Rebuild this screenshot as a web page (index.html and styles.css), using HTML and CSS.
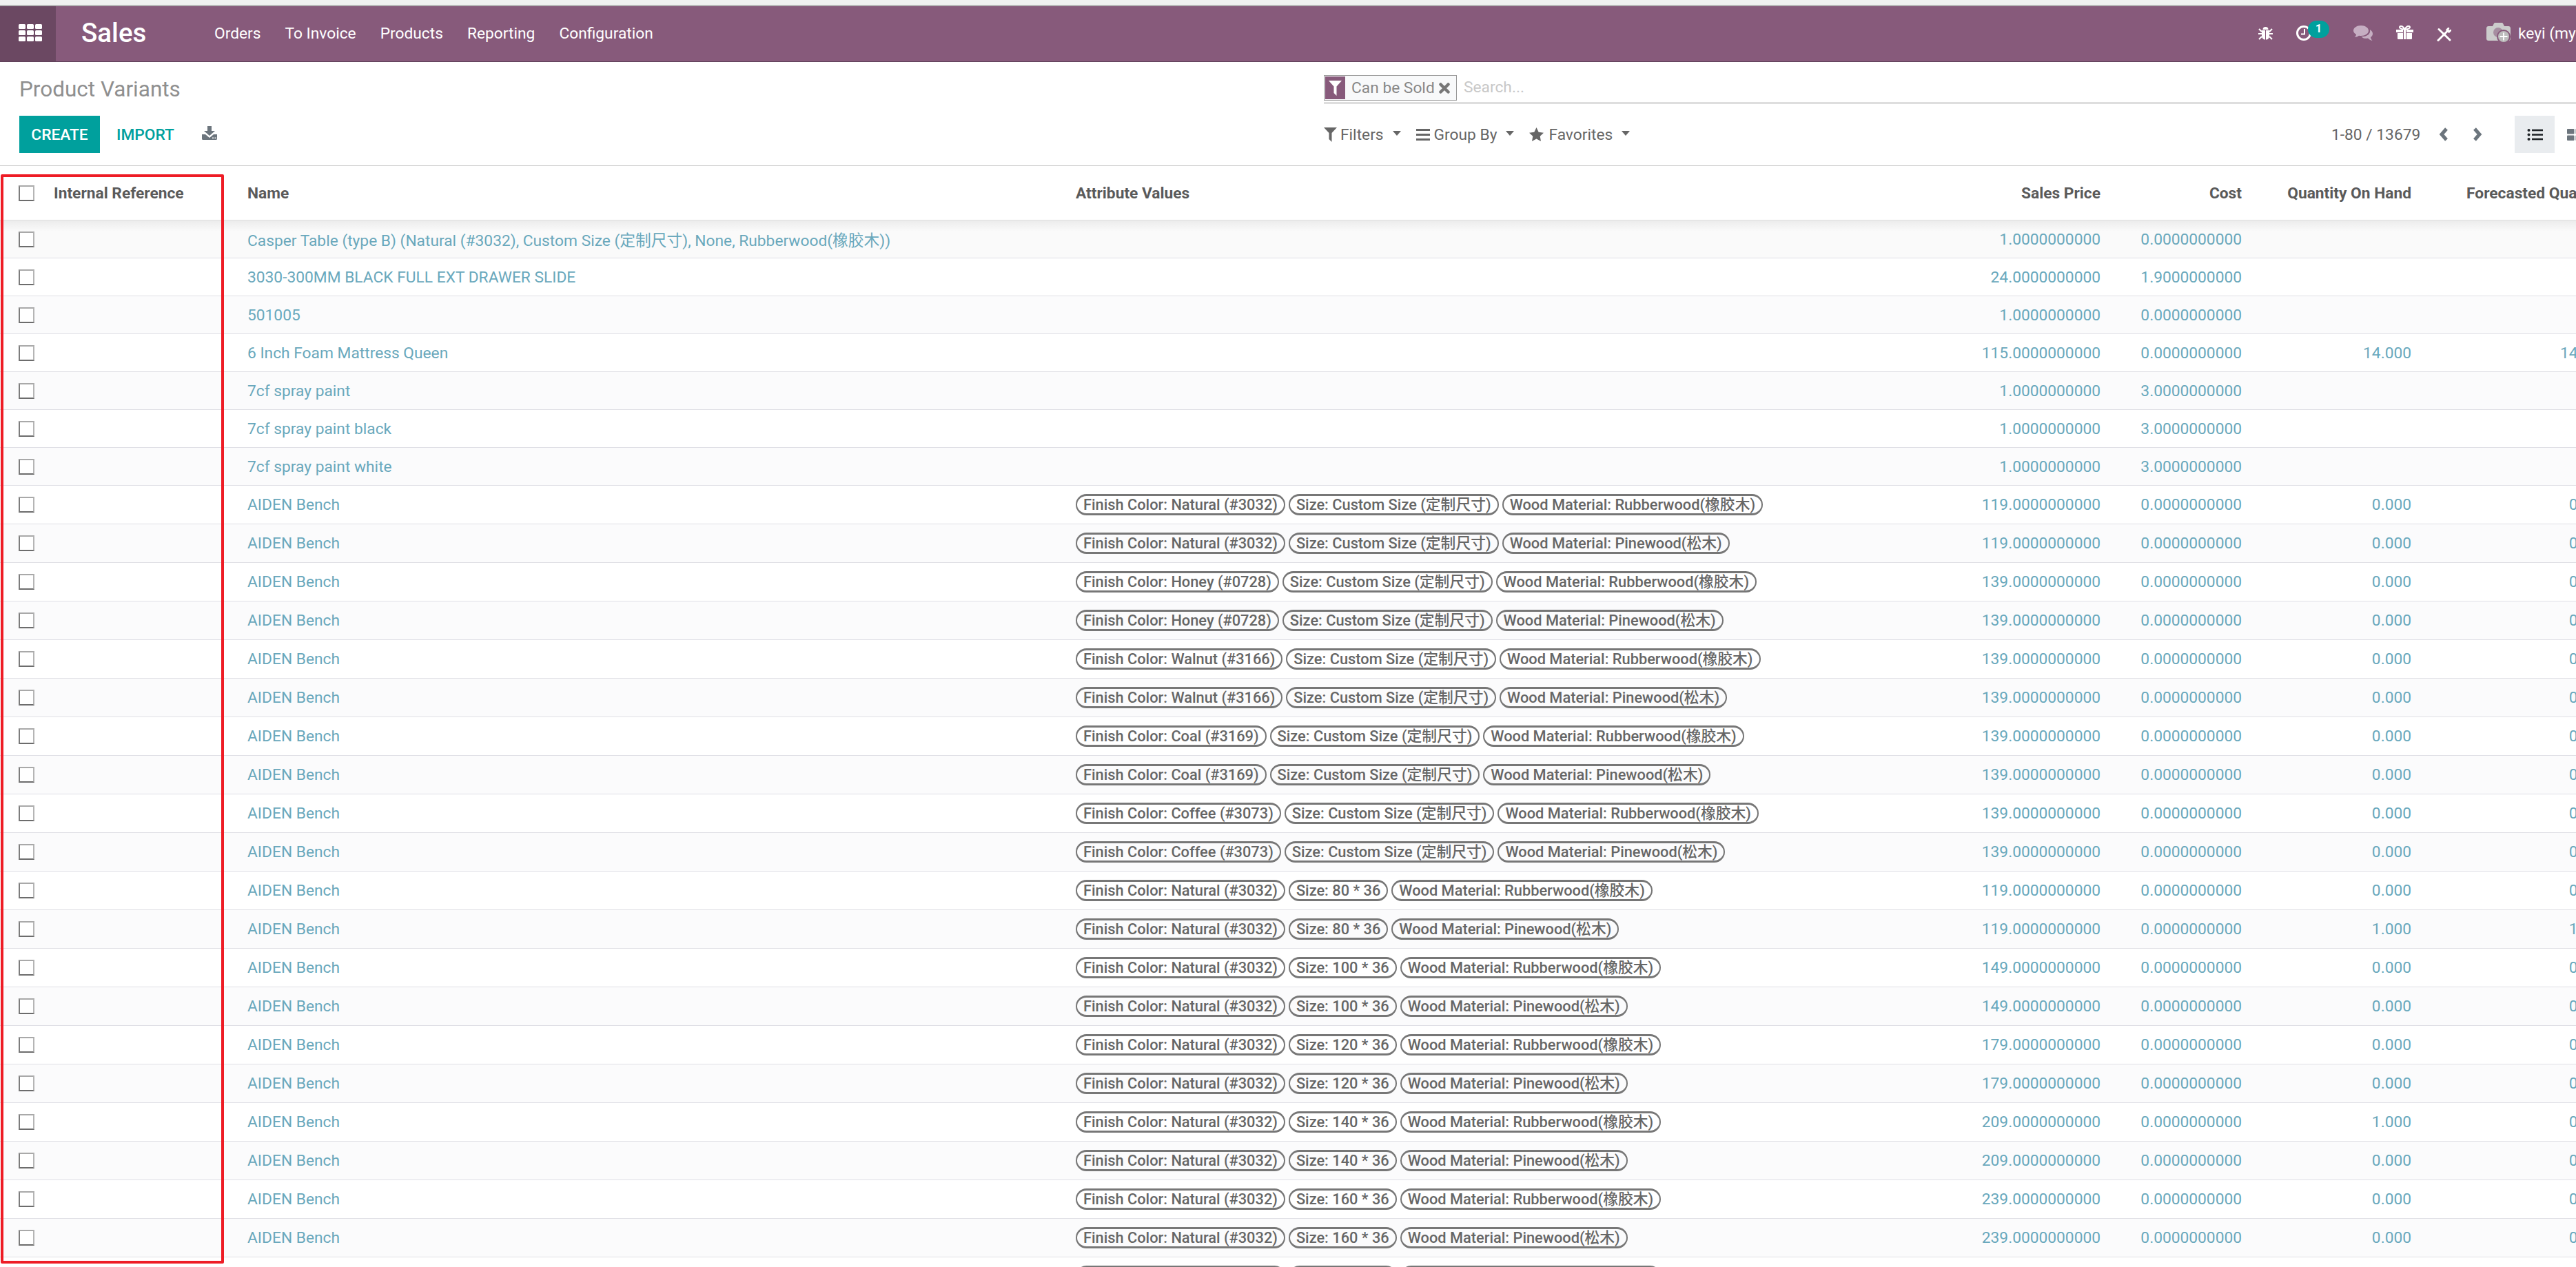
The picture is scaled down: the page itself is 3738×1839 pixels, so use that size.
FILE: index.html
```html
<!DOCTYPE html>
<html lang="en">
<head>
<meta charset="utf-8">
<title>Product Variants</title>
<link rel="stylesheet" href="styles.css">
</head>
<body>
<div class="topstrip"></div>
<nav class="nav">
  <a class="apps"><svg class="i-apps" viewBox="0 0 34 25"><g fill="#fff"><rect width="10" height="7" rx="1.5"/><rect x="12" width="10" height="7" rx="1.5"/><rect x="24" width="10" height="7" rx="1.5"/><rect y="9" width="10" height="7" rx="1.5"/><rect x="12" y="9" width="10" height="7" rx="1.5"/><rect x="24" y="9" width="10" height="7" rx="1.5"/><rect y="18" width="10" height="7" rx="1.5"/><rect x="12" y="18" width="10" height="7" rx="1.5"/><rect x="24" y="18" width="10" height="7" rx="1.5"/></g></svg></a>
  <span class="brand">Sales</span>
  <ul class="menu">
    <li>Orders</li><li>To Invoice</li><li>Products</li><li>Reporting</li><li>Configuration</li>
  </ul>
  <div class="systray">
    <svg class="i-bug" viewBox="0 0 21 20"><g fill="#fff"><path d="M6.5 5a4 4 0 0 1 8 0z"/><path d="M5 6h5v13.5c-3 0-5-2.500-5-6zM11 6h5v7.500c0 4-2 6-5 6z"/></g><g stroke="#fff" stroke-width="2" fill="none"><path d="M1 4l4 4M20 4l-4 4M0 11h5M21 11h-5M1 19l4-4M20 19l-4-4"/></g></svg>
    <span class="clock"><svg class="i-clock" viewBox="0 0 24 22"><circle cx="11" cy="11" r="9.500" fill="none" stroke="#fff" stroke-width="3"/><path d="M12 5v7.500H7" fill="none" stroke="#fff" stroke-width="2"/></svg><span class="badge">1</span></span>
    <svg class="i-chat" viewBox="0 0 28 22"><g fill="#c6aec2"><path d="M11 0c6 0 11 3.300 11 7.500S17 15 11 15c-1 0-2 0-3-.3C6 16 4 17 1.500 17 3 16 4 14.500 4 13 1.500 11.500 0 9.700 0 7.500 0 3.300 5 0 11 0z"/><path d="M24 6c2.500 1.500 4 3.500 4 6 0 2-1 3.700-3 5 0 1.500 1 3.500 2.500 5-2.500-.5-5-2-6.500-3.500-1 .2-2 .3-3 .3-2.500 0-5-.7-6.500-2.800 7 .5 14-3 12.500-10z"/></g></svg>
    <svg class="i-gift" viewBox="0 0 25 20"><g fill="#fff"><path d="M0 6h10v4H0zM15 6h10v4H15zM2 11h8v9H3.500C2.500 20 2 19.500 2 18.500zM15 11h8v7.500c0 1-.5 1.500-1.500 1.500H15zM11 6h3v14h-3z"/></g><path d="M12.500 5.500C10 1 7 0 5.500 1.500S6 5.500 12.500 5.500C19 5.500 21 3 19.500 1.500S15 1 12.500 5.500z" fill="none" stroke="#fff" stroke-width="2"/></svg>
    <svg class="i-tools" viewBox="0 0 21 20"><g fill="none" stroke="#fff" stroke-linecap="round"><path d="M3 2.500l16 15.500" stroke-width="3"/><path d="M16.500 4L2 18.500" stroke-width="3"/><path d="M14.500 3.500L17 1M17.500 6.500l2.500-2.500" stroke-width="2.500"/></g></svg>
    <svg class="i-cam" viewBox="0 0 35 30"><path fill="#ccc" d="M3 5h6l2-4c.3-.6.8-1 1.500-1h10c.7 0 1.200.4 1.500 1l2 4h6c1.700 0 3 1.300 3 3v15c0 1.700-1.300 3-3 3H3c-1.700 0-3-1.300-3-3V8c0-1.700 1.300-3 3-3z"/><circle cx="17" cy="14" r="7" fill="#875a7b" opacity=".55"/><circle cx="25" cy="20" r="9" fill="#bdbdbd" stroke="#875a7b" stroke-width="2"/><path d="M25 14.500v11M19.500 20h11" stroke="#fff" stroke-width="1.800"/></svg>
    <span class="user">keyi (mycompany)</span>
  </div>
</nav>

<section class="panel">
  <div class="panel-left">
    <h1 class="crumb">Product Variants</h1>
    <div class="buttons">
      <button class="btn-create">CREATE</button>
      <button class="btn-import">IMPORT</button>
      <svg class="i-down" viewBox="0 0 22 20"><path fill="#6c757d" d="M8 0h6v7h5l-8 7-8-7h5z"/><path fill="#6c757d" d="M0 12h5l6 5 6-5h5v6.500c0 .8-.7 1.500-1.500 1.500h-19C.7 20 0 19.300 0 18.500z"/><path fill="#fff" d="M15 16.500h2v1.500h-2zM18.500 16.500h2v1.500h-2z"/></svg>
    </div>
  </div>
  <div class="panel-right">
    <div class="search">
      <div class="facet">
        <span class="facet-icon"><svg class="i-facet" viewBox="0 0 19 22"><path fill="#fff" d="M0 0h19l-7.500 8.500V22L7.500 18V8.500z"/></svg></span>
        <span class="facet-text">Can be Sold</span>
        <svg class="i-x" viewBox="0 0 16 16"><path d="M2.500 2.500l11 11M13.500 2.500l-11 11" stroke="#777" stroke-width="4.500" stroke-linecap="round"/></svg>
      </div>
      <span class="placeholder">Search...</span>
    </div>
    <div class="tools">
      <div class="filters">
        <span class="drop"><svg class="i-funnel" viewBox="0 0 19 21"><path fill="#666" d="M0 0h19l-7.500 8V21L7.500 17V8z"/></svg>Filters<i class="caret"></i></span>
        <span class="drop"><svg class="i-bars" viewBox="0 0 20 17"><path fill="#666" d="M0 0h20v3H0zM0 7h20v3H0zM0 14h20v3H0z"/></svg>Group By<i class="caret"></i></span>
        <span class="drop"><svg class="i-star" viewBox="0 0 21 20"><path fill="#666" d="M10.500 0l3.200 6.700 7.300 1-5.300 5.100 1.300 7.200-6.500-3.500L4 20l1.300-7.200L0 7.700l7.300-1z"/></svg>Favorites<i class="caret"></i></span>
      </div>
      <div class="pager">
        <span class="count">1-80 / 13679</span>
        <svg class="i-chev" viewBox="0 0 14 22"><path d="M11 3L4 11l7 8" fill="none" stroke="#6c757d" stroke-width="5"/></svg>
        <svg class="i-chev next" viewBox="0 0 14 22"><path d="M3 3l7 8-7 8" fill="none" stroke="#6c757d" stroke-width="5"/></svg>
        <span class="view active"><svg class="i-list" viewBox="0 0 23 17"><g fill="#212529"><circle cx="2.500" cy="2" r="2"/><circle cx="2.500" cy="8.500" r="2"/><circle cx="2.500" cy="15" r="2"/><rect x="7" y=".7" width="16" height="2.600"/><rect x="7" y="7.200" width="16" height="2.600"/><rect x="7" y="13.700" width="16" height="2.600"/></g></svg></span>
        <span class="view"><svg class="i-kanban" viewBox="0 0 23 17"><g fill="#6c757d"><rect width="10.500" height="7.500" rx="1"/><rect x="12.500" width="10.500" height="7.500" rx="1"/><rect y="9.500" width="10.500" height="7.500" rx="1"/><rect x="12.500" y="9.500" width="10.500" height="7.500" rx="1"/></g></svg></span>
      </div>
    </div>
  </div>
</section>

<table class="list">
  <colgroup><col class="c-check"><col class="c-ref"><col class="c-name"><col class="c-attr"><col class="c-price"><col class="c-cost"><col class="c-qty"><col class="c-fore"></colgroup>
  <thead>
    <tr><th class="check-cell"><input type="checkbox"></th><th>Internal Reference</th><th>Name</th><th>Attribute Values</th><th class="num">Sales Price</th><th class="num">Cost</th><th class="num">Quantity On Hand</th><th class="num">Forecasted Quantity</th></tr>
  </thead>
  <tbody>
    <tr><td class="check-cell"><input type="checkbox"></td><td></td><td>Casper Table (type B) (Natural (#3032), Custom Size (定制尺寸), None, Rubberwood(橡胶木))</td><td></td><td class="num">1.0000000000</td><td class="num">0.0000000000</td><td class="num"></td><td class="num"></td></tr>
    <tr><td class="check-cell"><input type="checkbox"></td><td></td><td>3030-300MM BLACK FULL EXT DRAWER SLIDE</td><td></td><td class="num">24.0000000000</td><td class="num">1.9000000000</td><td class="num"></td><td class="num"></td></tr>
    <tr><td class="check-cell"><input type="checkbox"></td><td></td><td>501005</td><td></td><td class="num">1.0000000000</td><td class="num">0.0000000000</td><td class="num"></td><td class="num"></td></tr>
    <tr><td class="check-cell"><input type="checkbox"></td><td></td><td>6 Inch Foam Mattress Queen</td><td></td><td class="num">115.0000000000</td><td class="num">0.0000000000</td><td class="num">14.000</td><td class="num">14.000</td></tr>
    <tr><td class="check-cell"><input type="checkbox"></td><td></td><td>7cf spray paint</td><td></td><td class="num">1.0000000000</td><td class="num">3.0000000000</td><td class="num"></td><td class="num"></td></tr>
    <tr><td class="check-cell"><input type="checkbox"></td><td></td><td>7cf spray paint black</td><td></td><td class="num">1.0000000000</td><td class="num">3.0000000000</td><td class="num"></td><td class="num"></td></tr>
    <tr><td class="check-cell"><input type="checkbox"></td><td></td><td>7cf spray paint white</td><td></td><td class="num">1.0000000000</td><td class="num">3.0000000000</td><td class="num"></td><td class="num"></td></tr>
    <tr class="tagged"><td class="check-cell"><input type="checkbox"></td><td></td><td>AIDEN Bench</td><td><div class="tags"><span class="tag">Finish Color: Natural (#3032)</span><span class="tag">Size: Custom Size (定制尺寸)</span><span class="tag">Wood Material: Rubberwood(橡胶木)</span></div></td><td class="num">119.0000000000</td><td class="num">0.0000000000</td><td class="num">0.000</td><td class="num">0.000</td></tr>
    <tr class="tagged"><td class="check-cell"><input type="checkbox"></td><td></td><td>AIDEN Bench</td><td><div class="tags"><span class="tag">Finish Color: Natural (#3032)</span><span class="tag">Size: Custom Size (定制尺寸)</span><span class="tag">Wood Material: Pinewood(松木)</span></div></td><td class="num">119.0000000000</td><td class="num">0.0000000000</td><td class="num">0.000</td><td class="num">0.000</td></tr>
    <tr class="tagged"><td class="check-cell"><input type="checkbox"></td><td></td><td>AIDEN Bench</td><td><div class="tags"><span class="tag">Finish Color: Honey (#0728)</span><span class="tag">Size: Custom Size (定制尺寸)</span><span class="tag">Wood Material: Rubberwood(橡胶木)</span></div></td><td class="num">139.0000000000</td><td class="num">0.0000000000</td><td class="num">0.000</td><td class="num">0.000</td></tr>
    <tr class="tagged"><td class="check-cell"><input type="checkbox"></td><td></td><td>AIDEN Bench</td><td><div class="tags"><span class="tag">Finish Color: Honey (#0728)</span><span class="tag">Size: Custom Size (定制尺寸)</span><span class="tag">Wood Material: Pinewood(松木)</span></div></td><td class="num">139.0000000000</td><td class="num">0.0000000000</td><td class="num">0.000</td><td class="num">0.000</td></tr>
    <tr class="tagged"><td class="check-cell"><input type="checkbox"></td><td></td><td>AIDEN Bench</td><td><div class="tags"><span class="tag">Finish Color: Walnut (#3166)</span><span class="tag">Size: Custom Size (定制尺寸)</span><span class="tag">Wood Material: Rubberwood(橡胶木)</span></div></td><td class="num">139.0000000000</td><td class="num">0.0000000000</td><td class="num">0.000</td><td class="num">0.000</td></tr>
    <tr class="tagged"><td class="check-cell"><input type="checkbox"></td><td></td><td>AIDEN Bench</td><td><div class="tags"><span class="tag">Finish Color: Walnut (#3166)</span><span class="tag">Size: Custom Size (定制尺寸)</span><span class="tag">Wood Material: Pinewood(松木)</span></div></td><td class="num">139.0000000000</td><td class="num">0.0000000000</td><td class="num">0.000</td><td class="num">0.000</td></tr>
    <tr class="tagged"><td class="check-cell"><input type="checkbox"></td><td></td><td>AIDEN Bench</td><td><div class="tags"><span class="tag">Finish Color: Coal (#3169)</span><span class="tag">Size: Custom Size (定制尺寸)</span><span class="tag">Wood Material: Rubberwood(橡胶木)</span></div></td><td class="num">139.0000000000</td><td class="num">0.0000000000</td><td class="num">0.000</td><td class="num">0.000</td></tr>
    <tr class="tagged"><td class="check-cell"><input type="checkbox"></td><td></td><td>AIDEN Bench</td><td><div class="tags"><span class="tag">Finish Color: Coal (#3169)</span><span class="tag">Size: Custom Size (定制尺寸)</span><span class="tag">Wood Material: Pinewood(松木)</span></div></td><td class="num">139.0000000000</td><td class="num">0.0000000000</td><td class="num">0.000</td><td class="num">0.000</td></tr>
    <tr class="tagged"><td class="check-cell"><input type="checkbox"></td><td></td><td>AIDEN Bench</td><td><div class="tags"><span class="tag">Finish Color: Coffee (#3073)</span><span class="tag">Size: Custom Size (定制尺寸)</span><span class="tag">Wood Material: Rubberwood(橡胶木)</span></div></td><td class="num">139.0000000000</td><td class="num">0.0000000000</td><td class="num">0.000</td><td class="num">0.000</td></tr>
    <tr class="tagged"><td class="check-cell"><input type="checkbox"></td><td></td><td>AIDEN Bench</td><td><div class="tags"><span class="tag">Finish Color: Coffee (#3073)</span><span class="tag">Size: Custom Size (定制尺寸)</span><span class="tag">Wood Material: Pinewood(松木)</span></div></td><td class="num">139.0000000000</td><td class="num">0.0000000000</td><td class="num">0.000</td><td class="num">0.000</td></tr>
    <tr class="tagged"><td class="check-cell"><input type="checkbox"></td><td></td><td>AIDEN Bench</td><td><div class="tags"><span class="tag">Finish Color: Natural (#3032)</span><span class="tag">Size: 80 * 36</span><span class="tag">Wood Material: Rubberwood(橡胶木)</span></div></td><td class="num">119.0000000000</td><td class="num">0.0000000000</td><td class="num">0.000</td><td class="num">0.000</td></tr>
    <tr class="tagged"><td class="check-cell"><input type="checkbox"></td><td></td><td>AIDEN Bench</td><td><div class="tags"><span class="tag">Finish Color: Natural (#3032)</span><span class="tag">Size: 80 * 36</span><span class="tag">Wood Material: Pinewood(松木)</span></div></td><td class="num">119.0000000000</td><td class="num">0.0000000000</td><td class="num">1.000</td><td class="num">1.000</td></tr>
    <tr class="tagged"><td class="check-cell"><input type="checkbox"></td><td></td><td>AIDEN Bench</td><td><div class="tags"><span class="tag">Finish Color: Natural (#3032)</span><span class="tag">Size: 100 * 36</span><span class="tag">Wood Material: Rubberwood(橡胶木)</span></div></td><td class="num">149.0000000000</td><td class="num">0.0000000000</td><td class="num">0.000</td><td class="num">0.000</td></tr>
    <tr class="tagged"><td class="check-cell"><input type="checkbox"></td><td></td><td>AIDEN Bench</td><td><div class="tags"><span class="tag">Finish Color: Natural (#3032)</span><span class="tag">Size: 100 * 36</span><span class="tag">Wood Material: Pinewood(松木)</span></div></td><td class="num">149.0000000000</td><td class="num">0.0000000000</td><td class="num">0.000</td><td class="num">0.000</td></tr>
    <tr class="tagged"><td class="check-cell"><input type="checkbox"></td><td></td><td>AIDEN Bench</td><td><div class="tags"><span class="tag">Finish Color: Natural (#3032)</span><span class="tag">Size: 120 * 36</span><span class="tag">Wood Material: Rubberwood(橡胶木)</span></div></td><td class="num">179.0000000000</td><td class="num">0.0000000000</td><td class="num">0.000</td><td class="num">0.000</td></tr>
    <tr class="tagged"><td class="check-cell"><input type="checkbox"></td><td></td><td>AIDEN Bench</td><td><div class="tags"><span class="tag">Finish Color: Natural (#3032)</span><span class="tag">Size: 120 * 36</span><span class="tag">Wood Material: Pinewood(松木)</span></div></td><td class="num">179.0000000000</td><td class="num">0.0000000000</td><td class="num">0.000</td><td class="num">0.000</td></tr>
    <tr class="tagged"><td class="check-cell"><input type="checkbox"></td><td></td><td>AIDEN Bench</td><td><div class="tags"><span class="tag">Finish Color: Natural (#3032)</span><span class="tag">Size: 140 * 36</span><span class="tag">Wood Material: Rubberwood(橡胶木)</span></div></td><td class="num">209.0000000000</td><td class="num">0.0000000000</td><td class="num">1.000</td><td class="num">0.000</td></tr>
    <tr class="tagged"><td class="check-cell"><input type="checkbox"></td><td></td><td>AIDEN Bench</td><td><div class="tags"><span class="tag">Finish Color: Natural (#3032)</span><span class="tag">Size: 140 * 36</span><span class="tag">Wood Material: Pinewood(松木)</span></div></td><td class="num">209.0000000000</td><td class="num">0.0000000000</td><td class="num">0.000</td><td class="num">0.000</td></tr>
    <tr class="tagged"><td class="check-cell"><input type="checkbox"></td><td></td><td>AIDEN Bench</td><td><div class="tags"><span class="tag">Finish Color: Natural (#3032)</span><span class="tag">Size: 160 * 36</span><span class="tag">Wood Material: Rubberwood(橡胶木)</span></div></td><td class="num">239.0000000000</td><td class="num">0.0000000000</td><td class="num">0.000</td><td class="num">0.000</td></tr>
    <tr class="tagged"><td class="check-cell"><input type="checkbox"></td><td></td><td>AIDEN Bench</td><td><div class="tags"><span class="tag">Finish Color: Natural (#3032)</span><span class="tag">Size: 160 * 36</span><span class="tag">Wood Material: Pinewood(松木)</span></div></td><td class="num">239.0000000000</td><td class="num">0.0000000000</td><td class="num">0.000</td><td class="num">0.000</td></tr>
    <tr class="tagged"><td class="check-cell"><input type="checkbox"></td><td></td><td>AIDEN Bench</td><td><div class="tags"><span class="tag">Finish Color: Natural (#3032)</span><span class="tag">Size: 180 * 36</span><span class="tag">Wood Material: Rubberwood(橡胶木)</span></div></td><td class="num">269.0000000000</td><td class="num">0.0000000000</td><td class="num">0.000</td><td class="num">0.000</td></tr>
  </tbody>
</table>

<div class="callout"></div>
</body>
</html>
```
FILE: styles.css
```css
* { box-sizing: border-box; }
html, body { margin: 0; height: 100%; overflow: hidden; background: #fff; }
body {
  position: relative;
  width: 3738px;
  height: 1839px;
  font-family: Roboto, "Noto Sans CJK SC", sans-serif;
  font-size: 22.75px;
  color: #666;
}
svg { display: block; flex: none; }

.topstrip { height: 9px; background: #f0f0f0; border-bottom: 2px solid #b8b8b8; }

/* nav */
.nav {
  display: flex;
  align-items: stretch;
  height: 81px;
  background: #875a7b;
  border-bottom: 1px solid #5f4059;
  color: #fff;
  overflow: hidden;
}
.apps { width: 81px; background: #6b4862; display: flex; align-items: center; justify-content: center; padding-bottom: 4px; flex: none; }
.i-apps { width: 34px; height: 25px; margin-left: 7px; }
.brand { margin-left: 37px; width: 193px; font-size: 38.5px; font-weight: 500; line-height: 78px; flex: none; }
.menu { display: flex; list-style: none; margin: 0; padding: 0; gap: 35px; line-height: 80px; }
.systray { display: flex; align-items: flex-start; margin-left: auto; width: 461px; flex: none; white-space: nowrap; }
.i-bug { width: 21px; height: 20px; margin-top: 29px; }
.clock { position: relative; margin-left: 34px; margin-top: 28px; }
.i-clock { width: 24px; height: 22px; }
.badge {
  position: absolute; left: 17px; top: -7px;
  width: 31px; height: 25px; border-radius: 13px;
  background: #00a09d; color: #fff; font-size: 16px; font-weight: 700;
  text-align: center; line-height: 24px;
}
.i-chat { width: 28px; height: 22px; margin: 28px 0 0 59px; }
.i-gift { width: 25px; height: 20px; margin: 28px 0 0 34px; }
.i-tools { width: 21px; height: 20px; margin: 31px 0 0 34px; }
.i-cam { width: 35px; height: 30px; margin: 24px 0 0 51px; }
.user { margin-left: 11px; line-height: 80px; }

/* control panel */
.panel {
  display: flex;
  height: 151px;
  width: 3860px;
  border-bottom: 1px solid #ccc;
  padding-left: 28px;
}
.panel-left { width: 1893px; flex: none; }
.crumb { margin: 0; height: 78px; font-size: 31.5px; font-weight: 400; color: #8f8f8f; line-height: 80px; }
.buttons { display: flex; align-items: center; height: 54px; }
.btn-create, .btn-import {
  border: 0; height: 54px; font: 500 22.75px Roboto, sans-serif; padding: 0;
}
.btn-create { width: 117px; background: #00a09d; color: #fff; }
.btn-import { width: 132px; background: none; color: #00a09d; }
.i-down { width: 22px; height: 20px; margin: -5px 0 0 16px; }

.panel-right { flex: 1; }
.search { display: flex; align-items: flex-start; height: 41px; margin-top: 19px; border-bottom: 1px solid #888; }
.facet {
  display: flex; align-items: center;
  height: 37px; width: 193px;
  border: 1px solid #999; background: #f8f9fa;
  padding: 1px;
  flex: none;
}
.facet-icon { width: 29px; height: 33px; background: #875a7b; display: flex; align-items: center; justify-content: center; flex: none; }
.i-facet { width: 19px; height: 22px; }
.facet-text { margin-left: 9px; color: #888; white-space: nowrap; width: 127px; flex: none; }
.i-x { width: 16px; height: 16px; }
.placeholder { margin-left: 10px; color: #c8c8c8; line-height: 35px; }
.tools { display: flex; height: 54px; margin-top: 18px; align-items: center; }
.filters { display: flex; width: 1462px; gap: 22px; white-space: nowrap; align-items: center; }
.drop { display: inline-flex; align-items: center; }
.i-funnel { width: 19px; height: 21px; margin-right: 5px; }
.i-bars { width: 20px; height: 17px; margin-right: 6px; }
.i-star { width: 21px; height: 20px; margin-right: 7px; }
.caret { width: 0; height: 0; margin-left: 13px; border-left: 6px solid transparent; border-right: 6px solid transparent; border-top: 7px solid #666; margin-top: -4px; }
.pager { display: flex; align-items: center; height: 54px; }
.count { width: 156px; white-space: nowrap; }
.i-chev { width: 14px; height: 22px; }
.next { margin-left: 35px; }
.view { width: 58px; height: 54px; display: flex; align-items: center; justify-content: center; }
.pager .active { margin-left: 47px; background: #e9ecef; }
.i-list, .i-kanban { width: 23px; height: 17px; }

/* list */
.list { border-collapse: separate; border-spacing: 0; table-layout: fixed; width: 3795px; }
.c-check { width: 68px; }
.c-ref { width: 281px; }
.c-name { width: 1202px; }
.c-attr { width: 1090px; }
.c-price { width: 417px; }
.c-cost { width: 205px; }
.c-qty { width: 246px; }
.c-fore { width: 286px; }
th, td { padding: 0 10px; text-align: left; white-space: nowrap; }
th { height: 79px; font-weight: 700; color: #5a5a5a; border-bottom: 1px solid #dedede; }
td { height: 55px; color: #69a8bc; border-bottom: 1px solid #dfdfe5; }
.tagged td { height: 56px; }
.num { text-align: right; }
.check-cell { padding: 0 0 0 27px; }
tbody tr:nth-child(odd) td { background: #fbfbfc; }
tbody tr:first-child td { background: linear-gradient(#ececec, #fafafa 16px); }
input[type="checkbox"] {
  appearance: none;
  display: block;
  width: 23px; height: 23px; margin: 0;
  background: #fff;
  border-style: solid;
  border-width: 2px;
  border-color: #a9a9a9 #b5b5b5 #6c6c6c #7d7d7d;
}
.tags { display: flex; gap: 5px; }
.tag {
  display: block;
  height: 31px;
  border: solid #777;
  border-width: 3px 2px;
  border-radius: 16px;
  padding: 0 9px;
  font-size: 21.8px;
  font-weight: 500;
  line-height: 25px;
  color: #666;
}

/* red annotation drawn over the first column */
.callout {
  position: absolute;
  left: 1px; top: 253px;
  width: 324px; height: 1581px;
  border: 4px solid #ee1c25;
  border-radius: 2px;
}
```
